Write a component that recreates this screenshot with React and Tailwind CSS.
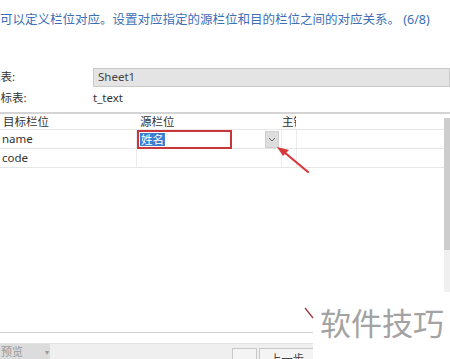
import React from "react";

function Row({ label, value, editing }) {
  return (
    <div className="flex h-[19px] border-b border-[#e6e6e6] items-stretch">
      <div className="w-[137px] pl-[2px] flex items-center border-r border-[#ececec]">{label}</div>
      <div className="w-[145px] flex items-stretch border-r border-[#ececec]">
        {editing ? (
          <div className="flex flex-1 items-center">
            <div className="w-[95px] h-[19px] border-2 border-[#c9363a] flex items-center pl-[1px]">
              <span className="bg-[#3c7fd0] text-white leading-[13px] px-[1px]">{value}</span>
            </div>
            <div className="flex-1" />
            <div className="w-[14px] h-[17px] mr-[2px] bg-[#dedede] border border-[#cfcfcf] flex items-center justify-center">
              <svg width="8" height="5" viewBox="0 0 8 5">
                <path d="M1 1 L4 4 L7 1" fill="none" stroke="#666" strokeWidth="1" />
              </svg>
            </div>
          </div>
        ) : null}
      </div>
      <div className="w-[15px] border-r border-[#ececec]" />
      <div className="flex-1" />
    </div>
  );
}

export default function App() {
  return (
    <div className="relative w-[450px] h-[359px] overflow-hidden bg-white text-[#333] text-[11.5px] font-['Noto_Sans','Noto_Sans_CJK_SC',sans-serif]">
      <div className="h-[42px] pt-[11px] whitespace-nowrap text-[12.5px] text-[#3d6fb6] leading-[18px]">
        可以定义栏位对应。设置对应指定的源栏位和目的栏位之间的对应关系。 (6/8)
      </div>

      <div className="mt-[25px] flex items-center h-[20px]">
        <div className="w-[93px] -ml-[11px] pl-0 whitespace-nowrap">源表:</div>
        <div className="flex-1 ml-[11px] h-[19px] bg-[#e4e4e4] border border-[#cacaca] pl-[4px] flex items-center text-[#444]">
          Sheet1
        </div>
      </div>
      <div className="flex items-center h-[20px] mt-[1px]">
        <div className="w-[104px] -ml-[11px] whitespace-nowrap">目标表:</div>
        <div className="">t_text</div>
      </div>

      <div className="mt-[4px] flex h-[220px] border-t-2 border-[#d4d4d4]">
        <div className="flex-1 flex flex-col">
          <div className="flex h-[16px] border-b border-[#e6e6e6] items-stretch">
            <div className="w-[137px] pl-[3px] flex items-center">目标栏位</div>
            <div className="w-[145px] pl-[3px] flex items-center">源栏位</div>
            <div className="w-[15px] overflow-hidden whitespace-nowrap flex items-center bg-[#f7f7f7] border-r border-white">
              主键
            </div>
            <div className="flex-1" />
          </div>
          <Row label="name" value="姓名" editing />
          <Row label="code" />
          <div className="flex-1" />
        </div>
        <div className="w-[6px] flex flex-col mt-[4px]">
          <div className="h-[132px] bg-[#cdcdcd]" />
          <div className="flex-1 bg-[#f0f0f0]" />
        </div>
      </div>

      <div className="h-[11px] border-t border-[#cfcfcf]" />
      <div className="h-[16px] bg-[#efefef] border-t border-[#e2e2e2] flex items-start">
        <div className="w-[50px] h-[16px] bg-[#dcdcdc] flex items-center justify-between px-[1px] text-[#999] text-[11px]">
          <span>预览</span>
          <span className="text-[8px]">▾</span>
        </div>
        <div className="flex-1" />
        <div className="mt-[4px] w-[25px] h-[14px] border border-[#c8c8c8] bg-[#f4f4f4] mr-[2px]" />
        <div className="mt-[4px] w-[56px] h-[14px] border border-[#c8c8c8] bg-[#f4f4f4] flex justify-center pt-[4px] leading-[12px] text-[#444] mr-[135px]">
          上一步
        </div>
      </div>

      <svg className="absolute left-[270px] top-[142px]" width="45" height="35" viewBox="0 0 45 35">
        <polygon points="7,5 19,8 13,14" fill="#d9383a" />
        <path d="M14 10 L38 30" stroke="#d9383a" strokeWidth="2.2" strokeLinecap="round" />
      </svg>

      <div className="absolute left-[313px] top-[292px] w-[137px] h-[67px] bg-white">
        <div className="mt-[12px] ml-[7px] text-[31px] leading-[36px] text-[#a3a3a3] font-['Noto_Sans_CJK_SC',sans-serif] whitespace-nowrap">
          软件技巧
        </div>
      </div>
      <svg className="absolute left-[303px] top-[306px]" width="12" height="14" viewBox="0 0 12 14">
        <path d="M2 2 L10 12" stroke="#a33a3f" strokeWidth="1.3" />
      </svg>
    </div>
  );
}
